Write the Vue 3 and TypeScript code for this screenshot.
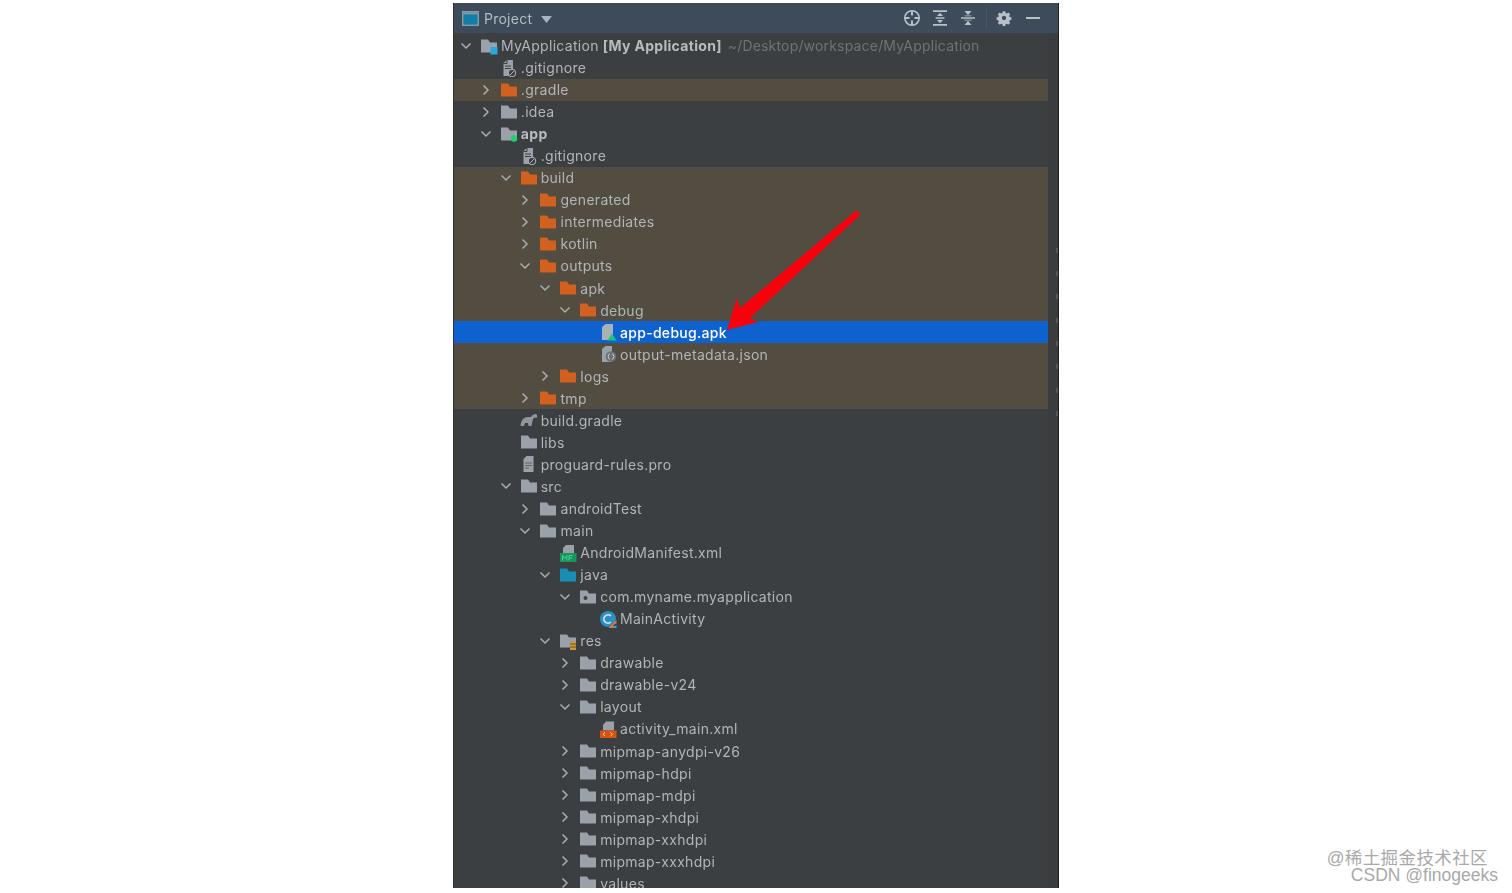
<template>
  <div class="page">
    <section class="panel">
      <header class="toolbar">
        <svg class="window-icon" width="17" height="15" viewBox="0 0 17 15">
          <rect x="0.7" y="0.7" width="15.6" height="13.6" fill="#0f7fa8" stroke="#8a98a6" stroke-width="1.4" />
          <rect x="1.4" y="1.4" width="14.2" height="2" fill="#8a98a6" />
        </svg>
        <span class="toolbar__title">Project</span>
        <svg class="caret" width="11" height="7" viewBox="0 0 11 7"><path d="M0 0h11L5.5 7z" fill="#a9b3bd" /></svg>
        <div class="toolbar__actions">
          <svg width="18" height="18" viewBox="0 0 18 18" fill="none" stroke="#b8c0c8" stroke-width="1.6">
            <circle cx="9" cy="9" r="7.2" />
            <path d="M9 1.5v5M9 11.5v5M1.5 9h5M11.5 9h5" stroke-width="2" />
          </svg>
          <svg width="18" height="18" viewBox="0 0 18 18" fill="#b8c0c8">
            <path d="M2 1.200h14v1.700H2zM2 15.100h14v1.700H2zM4.500 8.300h9v1.400h-9zM9 3.800l3 3.200H6zM9 14.200 6 11h6z" />
          </svg>
          <svg width="18" height="18" viewBox="0 0 18 18" fill="#b8c0c8">
            <path d="M2 8.200h14v1.600H2zM5.500 2h7L9 6.200zM9 11.800l3.500 4.200h-7zM5.500 6.500h7v.8h-7zM5.500 10.700h7v.8h-7z" />
          </svg>
          <span class="toolbar__sep" />
          <svg width="18" height="18" viewBox="-1.500 -1.500 21 21" fill="#b8c0c8">
            <path fill-rule="evenodd" d="M7.500 1.500h3l.4 2.100 1.400.6 1.800-1.200 2.100 2.100-1.200 1.800.6 1.400 2 .4v3l-2 .4-.6 1.400 1.200 1.800-2.100 2.100-1.800-1.200-1.400.6-.4 2h-3l-.4-2-1.400-.6-1.800 1.200-2.100-2.100 1.200-1.800-.6-1.400-2-.4v-3l2-.4.6-1.400-1.200-1.800 2.100-2.100 1.800 1.200 1.400-.6zM9 7a2.500 2.500 0 1 0 0 5 2.500 2.500 0 0 0 0-5z" transform="translate(0 -.5)" />
          </svg>
          <span class="toolbar__min" />
        </div>
      </header>

      <div class="body">
        <ul class="tree">
          <li
            v-for="row in rows"
            :key="row.id"
            class="row"
            :class="{ 'row--excluded': row.excluded, 'row--selected': row.selected }"
            :style="{ paddingLeft: 5 + row.depth * 19.83 + 'px' }"
          >
            <svg class="chevron" width="14" height="14" viewBox="0 0 14 14" fill="none" stroke="#a8adb2" stroke-width="1.5">
              <path v-if="row.arrow === 'open'" d="M2.500 4.500 7 9l4.500-4.500" />
              <path v-else-if="row.arrow === 'closed'" d="M4.500 2.500 9 7l-4.500 4.500" />
            </svg>

            <svg class="icon" width="18" height="18" viewBox="0 0 18 18">
              <template v-if="row.icon === 'folder'">
                <path d="M1 2.500h7L10 5.500h7v10H1z" :fill="folderColors[row.tint ?? 'gray']" />
              </template>
              <template v-else-if="row.icon === 'module'">
                <path d="M1 2.500h7L10 5.500h7v10H1z" fill="#9aa1a8" />
                <rect x="10.500" y="10" width="7" height="7.500" fill="#25a9df" />
              </template>
              <template v-else-if="row.icon === 'app'">
                <path d="M1 2.500h7L10 5.500h7v10H1z" fill="#9aa1a8" />
                <circle cx="14" cy="13.500" r="3.200" fill="#1fd16f" />
              </template>
              <template v-else-if="row.icon === 'package'">
                <path d="M1 2.500h7L10 5.500h7v10H1z" fill="#9aa1a8" />
                <circle cx="6.500" cy="10" r="2" fill="#3c3f41" />
              </template>
              <template v-else-if="row.icon === 'res'">
                <path d="M1 2.500h7L10 5.500h7v10H1z" fill="#9aa1a8" />
                <rect x="11" y="9.500" width="6" height="8.500" fill="#c99a3c" />
                <path d="M11 12h6M11 15h6" stroke="#6b5423" />
              </template>
              <template v-else-if="row.icon === 'ignore'">
                <path d="M3.500 4 7 1h6v16H3.500z" fill="#9aa1a8" />
                <path d="M7 1v3.500H3.500M5 7h6M5 9.500h6" fill="none" stroke="#3c3f41" />
                <circle cx="12" cy="14" r="3.800" fill="#3c3f41" stroke="#b0b5ba" stroke-width="1" />
                <path d="M9.800 16.200l4.400-4.400" stroke="#b0b5ba" />
              </template>
              <template v-else-if="row.icon === 'apk'">
                <path d="M3 4 6.500 1H14v16H3z" fill="#a9b0b7" />
                <path d="M8.500 17.500 13 10.500l4.500 7z" fill="#17c77e" />
              </template>
              <template v-else-if="row.icon === 'json'">
                <path d="M3 4 6.500 1H13v16H3z" fill="#9aa1a8" />
                <circle cx="12" cy="11.500" r="5.300" fill="#6b7075" />
                <path d="M10.500 8.500 9 11.500l1.500 3M13.500 8.500l1.500 3-1.500 3" fill="none" stroke="#cfd2d5" />
              </template>
              <template v-else-if="row.icon === 'gradle'">
                <path d="M.5 15C1 9 4 6 8 6h3c1-2 3-3 4.500-3S17.500 5 17 6.500c-1 .5-2 .3-3 0C12.500 9 12 12 11.500 15h-3L8 12H5l-1 3z" fill="#8f969d" />
              </template>
              <template v-else-if="row.icon === 'doc'">
                <path d="M3.500 4 6.500 1h7v16h-10z" fill="#9aa1a8" />
                <path d="M5 8h7M5 10.500h7M5 13h4" stroke="#5e6367" />
              </template>
              <template v-else-if="row.icon === 'manifest'">
                <path d="M4 4 7 1h8v8H4z" fill="#9aa1a8" />
                <rect x="1" y="9" width="16.500" height="9" fill="#14975b" />
                <path d="M3.500 16.500v-5l2.200 3 2.200-3v5M10 16.500v-5h3.500M10 14h3" fill="none" stroke="#5fcf9c" stroke-width=".9" />
              </template>
              <template v-else-if="row.icon === 'xml'">
                <path d="M4 5 7 1.500h8v9H4z" fill="#9aa1a8" />
                <rect x="1" y="10.500" width="16.500" height="7.500" fill="#d9540f" />
                <path d="M6 12.500 4 14.300 6 16M11.500 12.500l2 1.800-2 1.700" fill="none" stroke="#f1d6c5" />
              </template>
              <template v-else-if="row.icon === 'class'">
                <circle cx="9" cy="9" r="8" fill="#2a8fc2" />
                <path d="M12 6a4.200 4.200 0 1 0 0 6" fill="none" stroke="#d7e6ee" stroke-width="1.700" />
                <path d="M9.500 18 17.500 10v3.500L14 15l3.500 3z" fill="#e9762b" />
                <path d="M13 18l4.500-3v3z" fill="#2aa7e0" />
              </template>
            </svg>

            <span class="label" :class="{ 'label--strong': row.strong }">{{ row.label }}</span>
            <span v-if="row.module" class="label label--strong label--module">[My Application]</span>
            <span v-if="row.hint" class="label label--hint">{{ row.hint }}</span>
          </li>
        </ul>

        <aside class="gutter">
          <i v-for="y in ticks" :key="y" class="tick" :style="{ top: y + 'px' }" />
        </aside>
      </div>

      <svg class="pointer" width="140" height="125" viewBox="0 0 140 125">
        <path d="M1 121 11 89 14 99 128.500 3A3 3 0 0 1 132.500 7.500L24 109l8 4z" fill="#f8000c" />
      </svg>
    </section>

    <div class="watermark">
      <span>@稀土掘金技术社区</span>
      <span>CSDN @finogeeks</span>
    </div>
  </div>
</template>

<script setup lang="ts">
type Arrow = 'open' | 'closed' | 'none';
type Tint = 'gray' | 'orange' | 'blue';

interface Row {
  id: number;
  depth: number;
  label: string;
  arrow: Arrow;
  icon: string;
  tint?: Tint;
  excluded?: boolean;
  selected?: boolean;
  strong?: boolean;
  module?: boolean;
  hint?: string;
}

const folderColors: Record<Tint, string> = {
  gray: '#9aa1a8',
  orange: '#d2601f',
  blue: '#1a8db5',
};

// editor marks in the scrollbar gutter
const ticks = [213, 236, 259, 283, 306, 329, 353, 376];

// depth, label, arrow, icon, then whatever else the row needs
const raw: Array<[number, string, Arrow, string, Partial<Row>?]> = [
  [0, 'MyApplication', 'open', 'module', { module: true, hint: '~/Desktop/workspace/MyApplication' }],
  [1, '.gitignore', 'none', 'ignore'],
  [1, '.gradle', 'closed', 'folder', { tint: 'orange', excluded: true }],
  [1, '.idea', 'closed', 'folder'],
  [1, 'app', 'open', 'app', { strong: true }],
  [2, '.gitignore', 'none', 'ignore'],
  [2, 'build', 'open', 'folder', { tint: 'orange', excluded: true }],
  [3, 'generated', 'closed', 'folder', { tint: 'orange', excluded: true }],
  [3, 'intermediates', 'closed', 'folder', { tint: 'orange', excluded: true }],
  [3, 'kotlin', 'closed', 'folder', { tint: 'orange', excluded: true }],
  [3, 'outputs', 'open', 'folder', { tint: 'orange', excluded: true }],
  [4, 'apk', 'open', 'folder', { tint: 'orange', excluded: true }],
  [5, 'debug', 'open', 'folder', { tint: 'orange', excluded: true }],
  [6, 'app-debug.apk', 'none', 'apk', { selected: true }],
  [6, 'output-metadata.json', 'none', 'json', { excluded: true }],
  [4, 'logs', 'closed', 'folder', { tint: 'orange', excluded: true }],
  [3, 'tmp', 'closed', 'folder', { tint: 'orange', excluded: true }],
  [2, 'build.gradle', 'none', 'gradle'],
  [2, 'libs', 'none', 'folder'],
  [2, 'proguard-rules.pro', 'none', 'doc'],
  [2, 'src', 'open', 'folder'],
  [3, 'androidTest', 'closed', 'folder'],
  [3, 'main', 'open', 'folder'],
  [4, 'AndroidManifest.xml', 'none', 'manifest'],
  [4, 'java', 'open', 'folder', { tint: 'blue' }],
  [5, 'com.myname.myapplication', 'open', 'package'],
  [6, 'MainActivity', 'none', 'class'],
  [4, 'res', 'open', 'res'],
  [5, 'drawable', 'closed', 'folder'],
  [5, 'drawable-v24', 'closed', 'folder'],
  [5, 'layout', 'open', 'folder'],
  [6, 'activity_main.xml', 'none', 'xml'],
  [5, 'mipmap-anydpi-v26', 'closed', 'folder'],
  [5, 'mipmap-hdpi', 'closed', 'folder'],
  [5, 'mipmap-mdpi', 'closed', 'folder'],
  [5, 'mipmap-xhdpi', 'closed', 'folder'],
  [5, 'mipmap-xxhdpi', 'closed', 'folder'],
  [5, 'mipmap-xxxhdpi', 'closed', 'folder'],
  [5, 'values', 'closed', 'folder'],
];

const rows: Row[] = raw.map(([depth, label, arrow, icon, extra], id) => ({
  id,
  depth,
  label,
  arrow,
  icon,
  ...extra,
}));
</script>

<style scoped>
.page {
  height: 893px;
  display: flex;
  justify-content: center;
  padding-top: 3px;
  box-sizing: border-box;
  background: #fff;
  font-family: Inter, "Liberation Sans", sans-serif;
  overflow: hidden;
}

.panel {
  position: relative;
  width: 606px;
  height: 885px;
  background: #3c3f41;
  overflow: hidden;
  border-left: 1px solid #2f3132;
  border-right: 1px solid #1f2021;
  box-sizing: border-box;
  filter: blur(0.35px);
}

.toolbar {
  height: 30px;
  display: flex;
  align-items: center;
  padding: 0 18px 0 8px;
  background: #3d4b5b;
  color: #b4bcc4;
  font-size: 14px;
  letter-spacing: 0.25px;
}
.window-icon { flex-shrink: 0; }
.toolbar__title { margin-left: 5px; }
.caret { margin-left: 9px; margin-top: 2px; }
.toolbar__actions {
  margin-left: auto;
  display: flex;
  align-items: center;
  gap: 10px;
}
.toolbar__sep {
  width: 1px;
  height: 22px;
  background: #47586a;
  margin: 0 -2px 0 -1px;
}
.toolbar__min {
  width: 14px;
  height: 2px;
  background: #b8c0c8;
  margin-left: 3px;
}

.body {
  display: flex;
  padding-top: 1.5px;
}

.tree {
  flex: 1;
  min-width: 0;
  list-style: none;
  margin: 0;
  padding: 0;
}

.row {
  height: 22.05px;
  display: flex;
  align-items: center;
  white-space: nowrap;
  font-size: 14px;
  letter-spacing: 0.3px;
  color: #b1b5b8;
}
.row--excluded { background: #524d40; }
.row--selected { background: #0d62d0; color: #fff; font-weight: 500; }

.chevron { flex-shrink: 0; }
.icon { flex-shrink: 0; margin-left: 7px; }
.label { margin-left: 3px; }
.label--strong { font-weight: 700; color: #b8bcbf; }
.label--module { margin-left: 4px; }
.label--hint { margin-left: 6px; color: #6f7376; letter-spacing: 0.18px; }

.gutter {
  position: relative;
  width: 10px;
  background: #3a3c3e;
}
.tick {
  position: absolute;
  right: 0;
  width: 2px;
  height: 5px;
  background: #54575a;
}

.pointer {
  position: absolute;
  left: 272px;
  top: 206px;
}

.watermark {
  position: absolute;
  right: 14px;
  top: 850px;
  display: flex;
  flex-direction: column;
  align-items: flex-end;
  font-family: "Liberation Sans", "Noto Sans CJK SC", sans-serif;
  font-size: 17.5px;
  line-height: 17px;
  color: #a9a9a9;
}
.watermark span:first-child { margin-right: 10px; letter-spacing: 0.4px; }
</style>

<style>
html, body { background: #fff; }
</style>
